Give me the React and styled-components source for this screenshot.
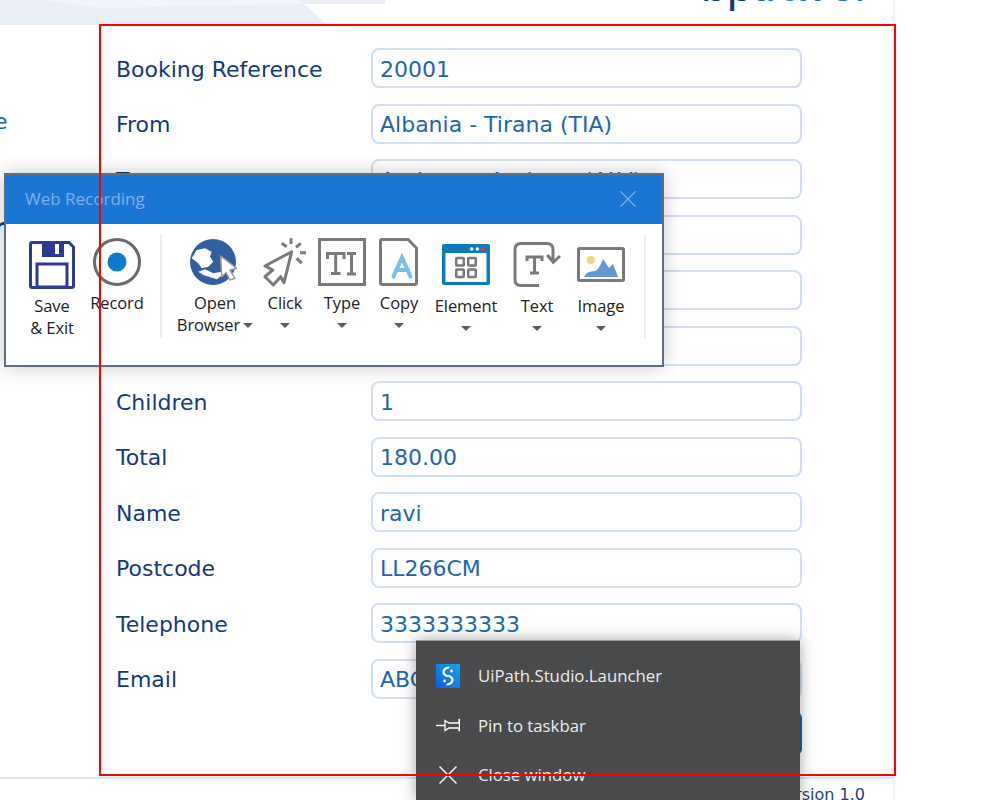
import React from "react";
import styled, { createGlobalStyle } from "styled-components";

const Global = createGlobalStyle`
  html, body { margin: 0; padding: 0; background: #fff; overflow: hidden; }
  #root { width: 995px; height: 800px; position: relative; overflow: hidden; }
  * { box-sizing: border-box; }
`;

const Page = styled.div`
  width: 895px; height: 800px; display: flex; flex-direction: column;
  border-right: 2px solid #eef3fa;
  font-family: "DejaVu Sans", Verdana, sans-serif;
`;
const Header = styled.header`
  position: relative; height: 25px; flex: none; overflow: hidden;
  display: flex; justify-content: flex-end; padding-right: 28px;
  &::before {
    content: ""; position: absolute; inset: 0; background: #eaeef7;
    clip-path: polygon(0 0, 300px 0, 327px 25px, 0 25px);
  }
  &::after {
    content: ""; position: absolute; inset: 0; background: #f2f4fa;
    clip-path: polygon(45px 0, 300px 0, 305px 4px, 100px 8px);
  }
`;
const TopStreak = styled.div`
  position: absolute; top: 0; left: 300px; width: 85px; height: 4px; background: #e8edf6;
  clip-path: polygon(0 0, 100% 0, 100% 100%, 5px 100%);
`;
const Logo = styled.div`
  position: relative; z-index: 1; margin-top: -41px; height: 52px; line-height: 52px;
  font-family: "Liberation Sans", Arial, sans-serif; font-size: 46px; color: #1f6fb8;
  white-space: nowrap;
`;
const LogoDark = styled.span` color: #173a7c; `;
const Main = styled.main` flex: 1; display: flex; min-height: 0; `;
const Sidebar = styled.nav`
  width: 116px; flex: none; overflow: hidden; display: flex; flex-direction: column;
  align-items: flex-start; padding-top: 84px; font-size: 22px;
`;
const SideLink = styled.span`
  color: #1d66ad; margin-left: -6px; line-height: 26px;
`;
const SideHead = styled.strong`
  color: #143a78; margin-left: -6px; margin-top: 79px; line-height: 26px;
`;
const Form = styled.form`
  padding-top: 23px; display: grid; grid-template-columns: 255px 431px;
  grid-auto-rows: 55.5px; align-content: start;
`;
const Label = styled.label`
  font-size: 22px; color: #143a78; height: 40px; margin-top: .5px; line-height: 42px; white-space: nowrap;
`;
const Field = styled.input`
  width: 431px; height: 40px; border: 2px solid #d2dff0; border-radius: 8px; padding: 2px 7px 0;
  font: 22px "DejaVu Sans", Verdana, sans-serif; color: #1d66ad; background: #fff; outline: none;
`;
const Actions = styled.div`
  grid-column: 2; display: flex; justify-content: flex-end; margin-top: -2px;
`;
const Submit = styled.button`
  width: 150px; height: 43px; border: 0; border-radius: 6px; background: #2a5f9e;
`;
const Footer = styled.footer`
  height: 23px; flex: none; border-top: 2px solid #dbe5f2; display: flex; justify-content: flex-end;
  padding-right: 28px; font-size: 16px; color: #1f3f7a; line-height: 31px; white-space: nowrap;
`;
const Highlight = styled.div`
  position: absolute; left: 99px; top: 24px; width: 797px; height: 752px;
  border: 2px solid #f00; z-index: 5; pointer-events: none;
`;
const Recorder = styled.section`
  position: absolute; left: 4px; top: 173px; width: 660px; height: 194px; z-index: 3;
  background: #fff; border: 2px solid #5f6f80; box-shadow: 0 0 18px rgba(0,0,0,.22);
  font-family: "Open Sans", "Noto Sans", sans-serif; color: #222;
`;
const TitleBar = styled.div`
  height: 49px; background: #1976d3; display: flex; align-items: center; justify-content: space-between;
  padding: 0 26px 2px 19px; color: #7fb0ea; font-size: 17px;
`;
const Ribbon = styled.div`
  display: flex; align-items: flex-start; padding: 10px 0 0 18px; height: 113px;
`;
const Tool = styled.div`
  width: ${p => p.$w}px; flex: none; display: flex; flex-direction: column; align-items: center;
  margin-left: ${p => p.$ml || 0}px;
  padding-top: 4px; font-size: 16.5px; line-height: 22px; white-space: nowrap; letter-spacing: -.1px;
`;
const IconBox = styled.div`
  width: 48px; height: 48px; flex: none;
  svg { display: block; overflow: visible; }
`;
const ToolLabel = styled.span`
  margin-top: ${p => (p.$low ? 9 : 6)}px; text-align: center;
`;
const Caret = styled.i`
  display: inline-block; width: 0; height: 0; border: 5px solid transparent; border-bottom: 0;
  border-top: 5px solid #5c5c5c; vertical-align: 3px;
`;
const CaretRow = styled.span`
  height: 22px; display: flex; align-items: center; justify-content: center;
`;
const InlineCaret = styled(Caret)` margin-left: 3px; `;
const Divider = styled.div`
  width: 2px; height: 104px; background: #eeeeee; flex: none;
  margin: 0 ${p => p.$r || 0}px 0 ${p => p.$l || 0}px;
`;
const JumpList = styled.aside`
  position: absolute; left: 416px; top: 640px; width: 384px; height: 160px; z-index: 4;
  background: #4a4b4c; border-top: 1px solid #9a9a9a; box-shadow: 0 0 14px rgba(0,0,0,.35);
  padding: 10px 0 0 20px; font-family: "Open Sans", "Noto Sans", sans-serif; color: #ececec; font-size: 16.75px;
`;
const JumpRow = styled.div`
  height: 49.5px; display: flex; align-items: center; gap: 18px; white-space: nowrap;
  svg { flex: none; display: block; }
`;
const CloseSlot = styled.span` width: 24px; padding-left: 3px; `;

const G = "#7a7a7a";
const Save = () => (
  <svg width="48" height="48" viewBox="0 0 48 48">
    <path d="M4 4.5H41L45.5 9V47.5Q45.5 49.5 43.5 49.5H4Q2.5 49.5 2.5 47.5V6Q2.5 4.5 4 4.5Z" fill="#fff" stroke="#2e3a92" strokeWidth="3" />
    <path d="M14 4H36V19H14Z" fill="#2e3a92" />
    <rect x="27" y="6" width="4" height="10" fill="#fff" />
    <rect x="9" y="26" width="30" height="23" fill="#fff" stroke="#2e3a92" strokeWidth="3" />
  </svg>
);
const Rec = () => (
  <svg width="48" height="48" viewBox="0 0 48 48">
    <circle cx="24" cy="24" r="22.5" fill="#fff" stroke="#6a6a6a" strokeWidth="3" />
    <circle cx="24" cy="24" r="9.5" fill="#0d7cc8" />
  </svg>
);
const Globe = () => (
  <svg width="48" height="48" viewBox="0 0 48 48">
    <circle cx="22" cy="24" r="23" fill="#335f9f" />
    <path d="M5.7 12L14 10.3L20.7 13.7L19 18.7L22.3 23.7L17.3 28.7L10.7 30.3L7.3 25.3L.7 20.3Z" fill="#fff" />
    <path d="M7.3 33.7L12.3 37L25.7 41.3L34 35.3L30.7 33.7L22.3 35.3L14 31.3Z" fill="#fff" />
    <path d="M29.7 18L45.7 30.3L39 32L44 40.3L39 42L35 34.7L30.7 38.7Z" fill="#fff" stroke="#9a9a9a" strokeWidth="1.5" strokeLinejoin="round" />
  </svg>
);
const Click = () => (
  <svg width="48" height="48" viewBox="0 0 48 48" fill="none" stroke={G} strokeWidth="3">
    <path d="M30.7 13.7L4 28L11.7 32L4 38.7L12.3 47L19.7 38.7L23 44.7Z" fill="#fff" strokeLinejoin="round" />
    <path d="M30 .3V6M20.7 5.3L25.7 8.7M39.7 5.3L35 9.3M39 14.7H45M35.7 20.3L40.7 25.3" />
  </svg>
);
const TypeIcon = () => (
  <svg width="48" height="48" viewBox="0 0 48 48" fill="none" stroke={G} strokeWidth="3">
    <rect x="1.5" y="1.5" width="45" height="45" />
    <path d="M9.5 21V15.5H26V21M17.7 15.5V35M13 35.5H22.5M29 15.5H38M33.5 15.5V36M29 36H38" />
  </svg>
);
const Copy = () => (
  <svg width="48" height="48" viewBox="0 0 48 48" fill="none">
    <path d="M6 1.5H33L41.5 10V44.5Q41.5 46.5 39.5 46.5H7.5Q5.5 46.5 5.5 44.5V3Q5.5 1.5 7 1.5Z" fill="#fff" stroke={G} strokeWidth="3" />
    <path d="M18.5 38.5L27 19.5L35.5 38.5M21 32H33" stroke="#7bbce8" strokeWidth="4" strokeLinecap="round" />
  </svg>
);
const Element = () => (
  <svg width="48" height="48" viewBox="0 0 48 48">
    <rect x="0" y="6" width="48" height="41" rx="2" fill="#0f7ab8" />
    <rect x="3.5" y="15" width="41" height="29" fill="#fff" />
    <circle cx="29.7" cy="11" r="1.7" fill="#fff" />
    <circle cx="35.3" cy="11" r="1.7" fill="#fff" />
    <circle cx="41.3" cy="11" r="1.9" fill="#e0384f" />
    <g fill="none" stroke={G} strokeWidth="2.5">
      <rect x="14.25" y="20" width="7.5" height="7.5" rx=".5" />
      <rect x="26.25" y="20" width="7.5" height="7.5" rx=".5" />
      <rect x="14.25" y="31.5" width="7.5" height="7.5" rx=".5" />
      <rect x="26.25" y="31.5" width="7.5" height="7.5" rx=".5" />
    </g>
  </svg>
);
const TextIcon = () => (
  <svg width="48" height="48" viewBox="0 0 48 48" fill="none" stroke={G} strokeWidth="3">
    <path d="M26 47.5H8Q2 47.5 2 41.5V11.5Q2 5.5 8 5.5H34Q40 5.5 40 11.5V24M34.3 17L40.3 24.3L47 18" />
    <path d="M14 23V19H29V23M21.5 19V35M17 35H26" />
  </svg>
);
const ImageIcon = () => (
  <svg width="48" height="48" viewBox="0 0 48 48">
    <rect x="1.5" y="10.5" width="45" height="32" rx="1" fill="#fff" stroke={G} strokeWidth="3" />
    <circle cx="13.7" cy="22" r="4" fill="#f0d878" />
    <path d="M7 39Q9 33 18 33Q22 32 26 21L32 30L36 26L41 39Z" fill="#6496d0" />
  </svg>
);
const Close = ({ size, color, w = 1.2 }) => (
  <svg width={size} height={size} viewBox="0 0 18 18" stroke={color} strokeWidth={w}>
    <path d="M.5 .5L17.5 17.5M17.5 .5L.5 17.5" />
  </svg>
);
const UiPath = () => (
  <svg width="24" height="24" viewBox="0 0 24 24">
    <defs>
      <linearGradient id="uip" x1="0" y1="1" x2="1" y2="0">
        <stop offset="0" stopColor="#0a62d8" /><stop offset="1" stopColor="#1aa0ea" />
      </linearGradient>
    </defs>
    <rect width="24" height="24" fill="url(#uip)" />
    <path d="M12.5 3.5Q7.5 4.5 7.5 8.5Q7.5 10.5 11 12" fill="none" stroke="#fff" strokeWidth="2.2" strokeLinecap="round" />
    <path d="M13 12Q16.5 13.5 16.5 15.5Q16.5 19.5 11.5 20.5" fill="none" stroke="#fff" strokeWidth="2.2" strokeLinecap="round" />
    <circle cx="15.5" cy="7" r="1.4" fill="#fff" />
    <circle cx="8.5" cy="17" r="1.4" fill="#fff" />
  </svg>
);
const Pin = () => (
  <svg width="24" height="16" viewBox="0 0 24 16" fill="none" stroke="#fff" strokeWidth="1.3">
    <path d="M0 8.5H9M9 3.5L13 6H23V2.5H23.5V13.5H23V11H13L9 13.5Z" />
  </svg>
);

const rows = [
  ["Booking Reference", "20001"], ["From", "Albania - Tirana (TIA)"], ["To", "Andorra - Andorra (ALV)"],
  ["", ""], ["", ""], ["", ""], ["Children", "1"], ["Total", "180.00"], ["Name", "ravi"],
  ["Postcode", "LL266CM"], ["Telephone", "3333333333"], ["Email", "ABC"],
];

const tools = [
  { w: 50, low: false, label: "Click", icon: <Click /> },
  { w: 64, low: false, label: "Type", icon: <TypeIcon /> },
  { w: 50, low: false, label: "Copy", icon: <Copy /> },
  { w: 84, low: true, label: "Element", icon: <Element /> },
  { w: 58, low: true, label: "Text", icon: <TextIcon /> },
  { w: 70, low: true, label: "Image", icon: <ImageIcon /> },
];

export default function App() {
  return (
    <>
      <Global />
      <Page>
        <Header>
          <TopStreak />
          <Logo><LogoDark>bp</LogoDark>travel</Logo>
        </Header>
        <Main>
          <Sidebar>
            <SideLink>e</SideLink>
            <SideHead>r</SideHead>
          </Sidebar>
          <Form>
            {rows.map(([l, v], i) => (
              <React.Fragment key={i}>
                <Label>{l}</Label>
                <Field readOnly value={v} />
              </React.Fragment>
            ))}
            <Actions><Submit type="button" aria-label="Submit" /></Actions>
          </Form>
        </Main>
        <Footer>Version 1.0</Footer>
      </Page>

      <Highlight />

      <Recorder>
        <TitleBar>
          Web Recording
          <Close size={16} color="#8fbcf0" />
        </TitleBar>
        <Ribbon>
          <Tool $w={56}>
            <IconBox><Save /></IconBox>
            <ToolLabel $low>Save<br />&amp; Exit</ToolLabel>
          </Tool>
          <Tool $w={62} $ml={6}>
            <IconBox><Rec /></IconBox>
            <ToolLabel>Record</ToolLabel>
          </Tool>
          <Divider $l={12} $r={8} />
          <Tool $w={90}>
            <IconBox><Globe /></IconBox>
            <ToolLabel>Open<br />Browser<InlineCaret /></ToolLabel>
          </Tool>
          {tools.map(t => (
            <Tool key={t.label} $w={t.w}>
              <IconBox>{t.icon}</IconBox>
              <ToolLabel $low={t.low}>{t.label}</ToolLabel>
              <CaretRow><Caret /></CaretRow>
            </Tool>
          ))}
          <Divider $l={8} />
        </Ribbon>
      </Recorder>

      <JumpList>
        <JumpRow><UiPath />UiPath.Studio.Launcher</JumpRow>
        <JumpRow><Pin />Pin to taskbar</JumpRow>
        <JumpRow><CloseSlot><Close size={18} color="#fff" w={1.4} /></CloseSlot>Close window</JumpRow>
      </JumpList>
    </>
  );
}
